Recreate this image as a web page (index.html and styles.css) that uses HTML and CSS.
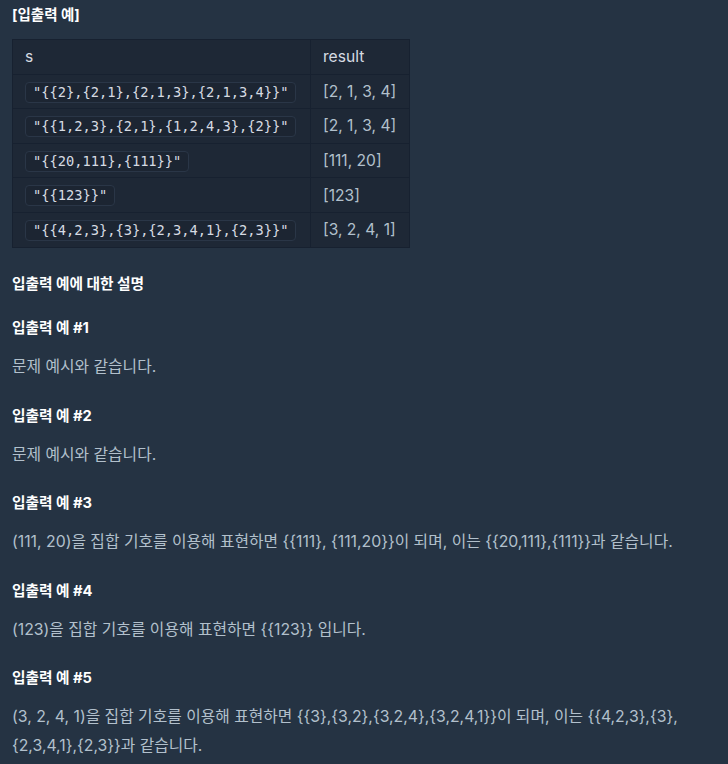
FILE: index.html
```html
<!DOCTYPE html>
<html lang="ko">
<head>
<meta charset="utf-8">
<link rel="stylesheet" href="styles.css">
</head>
<body>
<div class="content">
  <h5 class="title">[입출력 예]</h5>
  <table class="io">
    <colgroup><col class="col-s"><col class="col-r"></colgroup>
    <thead>
      <tr><th>s</th><th>result</th></tr>
    </thead>
    <tbody>
      <tr><td><code>"{{2},{2,1},{2,1,3},{2,1,3,4}}"</code></td><td>[2, 1, 3, 4]</td></tr>
      <tr><td><code>"{{1,2,3},{2,1},{1,2,4,3},{2}}"</code></td><td>[2, 1, 3, 4]</td></tr>
      <tr><td><code>"{{20,111},{111}}"</code></td><td>[111, 20]</td></tr>
      <tr><td><code>"{{123}}"</code></td><td>[123]</td></tr>
      <tr><td><code>"{{4,2,3},{3},{2,3,4,1},{2,3}}"</code></td><td>[3, 2, 4, 1]</td></tr>
    </tbody>
  </table>

  <h5 class="heading first">입출력 예에 대한 설명</h5>

  <h5 class="heading">입출력 예 #1</h5>
  <p class="text">문제 예시와 같습니다.</p>

  <h5 class="heading">입출력 예 #2</h5>
  <p class="text">문제 예시와 같습니다.</p>

  <h5 class="heading">입출력 예 #3</h5>
  <p class="text">(111, 20)을 집합 기호를 이용해 표현하면 {{111}, {111,20}}이 되며, 이는 {{20,111},{111}}과 같습니다.</p>

  <h5 class="heading">입출력 예 #4</h5>
  <p class="text">(123)을 집합 기호를 이용해 표현하면 {{123}} 입니다.</p>

  <h5 class="heading">입출력 예 #5</h5>
  <p class="text">(3, 2, 4, 1)을 집합 기호를 이용해 표현하면 {{3},{3,2},{3,2,4},{3,2,4,1}}이 되며, 이는 {{4,2,3},{3},{2,3,4,1},{2,3}}과 같습니다.</p>
</div>
</body>
</html>
```

FILE: styles.css
```css
html, body {
  margin: 0;
  padding: 0;
  background: #253343;
}

body {
  font-family: Inter, "Noto Sans CJK KR", sans-serif;
  color: #b2c0cc;
  height: 764px;
  overflow: hidden;
}

.content {
  padding: 0 12px;
}

.title {
  margin: 5px 0 14px;
  font-size: 14.5px;
  line-height: 20px;
  font-weight: 700;
  color: #ffffff;
}

.io {
  border-collapse: collapse;
  table-layout: fixed;
  width: 397px;
  background: #1e2836;
  font-size: 15.6px;
}

.col-s {
  width: 298px;
}

.col-r {
  width: 99px;
}

.io th,
.io td {
  border: 1px solid #172130;
  height: 33.6px;
  padding: 0 12px;
  text-align: left;
  vertical-align: middle;
  font-weight: 400;
  line-height: 21px;
  white-space: nowrap;
}

.io th {
  color: #d5dbe2;
}

.io td {
  color: #b2c0cc;
}

.io code {
  display: inline-block;
  font-family: "DejaVu Sans Mono", monospace;
  font-size: 13.7px;
  line-height: 19px;
  padding: 0 7px;
  border: 1px solid #2a3647;
  border-radius: 4px;
  background: #1c2532;
  color: #d6dbe2;
  vertical-align: middle;
}

.heading {
  margin: 24.5px 0 14px;
  font-size: 14.7px;
  line-height: 20px;
  font-weight: 700;
  color: #ffffff;
}

.heading.first {
  margin-top: 26px;
}

.text {
  margin: 0;
  font-size: 15.8px;
  line-height: 29px;
  color: #b2c0cc;
}
```
